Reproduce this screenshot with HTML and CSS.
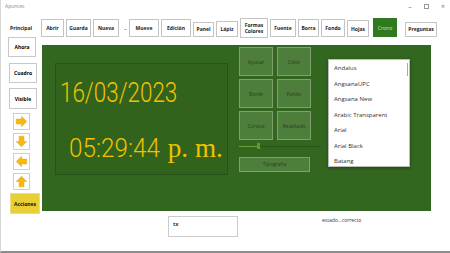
FILE: index.html
```html
<!DOCTYPE html>
<html lang="es">
<head>
    <meta charset="UTF-8">
    <meta name="viewport" content="width=device-width, initial-scale=1.0">
    <title>Apuntes</title>
    <link rel="stylesheet" href="styles.css">
</head>
<body>
    <div class="window">
        <header class="titlebar">
            <span class="title">Apuntes</span>
            <div class="controls">
                <span class="ctl">&#8211;</span>
                <span class="ctl max"></span>
                <span class="ctl">&#215;</span>
            </div>
        </header>

        <nav class="toolbar">
            <span class="label">Principal</span>
            <button class="tool abrir">Abrir</button>
            <button class="tool guarda">Guarda</button>
            <button class="tool nueva">Nueva</button>
            <span class="dash"></span>
            <button class="tool mueve">Mueve</button>
            <button class="tool edicion">Edición</button>
            <button class="tool panel-btn">Panel</button>
            <button class="tool lapiz">Lápiz</button>
            <button class="tool formas">Formas<br>Colores</button>
            <button class="tool fuente">Fuente</button>
            <button class="tool borra">Borra</button>
            <button class="tool fondo">Fondo</button>
            <button class="tool hojas">Hojas</button>
            <button class="tool crono">Crono</button>
            <button class="tool preguntas">Preguntas</button>
        </nav>

        <main class="workspace">
            <aside class="side">
                <button class="side-btn ahora">Ahora</button>
                <button class="side-btn cuadro">Cuadro</button>
                <button class="side-btn visible">Visible</button>
                <button class="arrow">
                    <svg viewBox="0 0 16 16" width="13" height="13"><polygon points="1.5,5 8,5 8,1.5 14.5,8 8,14.5 8,11 1.5,11"/></svg>
                </button>
                <button class="arrow">
                    <svg viewBox="0 0 16 16" width="13" height="13"><polygon points="5,1.5 11,1.5 11,8 14.5,8 8,14.5 1.5,8 5,8"/></svg>
                </button>
                <button class="arrow">
                    <svg viewBox="0 0 16 16" width="13" height="13"><polygon points="14.5,5 8,5 8,1.5 1.5,8 8,14.5 8,11 14.5,11"/></svg>
                </button>
                <button class="arrow">
                    <svg viewBox="0 0 16 16" width="13" height="13"><polygon points="5,14.5 11,14.5 11,8 14.5,8 8,1.5 1.5,8 5,8"/></svg>
                </button>
                <button class="acciones">Acciones</button>
            </aside>

            <section class="panel">
                <div class="clock">
                    <div class="date">16/03/2023</div>
                    <div class="time">05:29:44 <span class="ampm">p. m.</span></div>
                </div>

                <div class="format">
                    <div class="format-grid">
                        <button class="fmt">Ajustar</button>
                        <button class="fmt">Color</button>
                        <button class="fmt">Borde</button>
                        <button class="fmt">Fondo</button>
                        <button class="fmt">Cursiva</button>
                        <button class="fmt">Resaltado</button>
                    </div>
                    <div class="slider">
                        <span class="track-fill"></span>
                        <span class="thumb"></span>
                        <span class="track-rest"></span>
                    </div>
                    <button class="fmt tipografia">Tipografía</button>
                </div>

                <div class="fonts">
                    <ul>
                        <li>Andalus</li>
                        <li>AngsanaUPC</li>
                        <li>Angsana New</li>
                        <li>Arabic Transparent</li>
                        <li>Arial</li>
                        <li>Arial Black</li>
                        <li>Batang</li>
                    </ul>
                    <span class="scroll-thumb"></span>
                </div>
            </section>
        </main>

        <footer class="statusbar">
            <div class="textbox">tx</div>
            <span class="status">estado...correcto</span>
        </footer>
    </div>
</body>
</html>
```

FILE: styles.css
```css
/* Reset default margin and padding */
* {
    margin: 0;
    padding: 0;
    box-sizing: border-box;
}

body {
    font-family: "Open Sans", "Noto Sans", Arial, sans-serif;
    background-color: #fff;
    color: #222;
}

button {
    font-family: inherit;
    cursor: pointer;
}

.window {
    width: 450px;
    height: 253px;
    border-left: 1px solid #d8d8d8;
    border-bottom: 2px solid #8c8c8c;
    overflow: hidden;
}

/* Title bar */
.titlebar {
    height: 18px;
    display: flex;
    justify-content: space-between;
    align-items: flex-start;
    padding: 3px 0 0 4px;
}

.title {
    font-size: 5px;
    color: #8a8a8a;
}

.controls {
    display: flex;
    gap: 11px;
    padding-right: 4px;
    color: #777;
    font-size: 7px;
    line-height: 7px;
}

.ctl {
    width: 6px;
    text-align: center;
}

.ctl.max {
    width: 5px;
    height: 5px;
    margin-top: 1px;
    border: 1px solid #999;
}

/* Top toolbar */
.toolbar {
    height: 19px;
    display: flex;
    align-items: center;
    gap: 2px;
    padding-left: 9px;
}

.label {
    width: 23px;
    margin-right: 6px;
    font-size: 5px;
    font-weight: 700;
}

.tool {
    height: 18px;
    background-color: #fff;
    border: 1px solid #c4c4c4;
    font-size: 5px;
    font-weight: 700;
    line-height: 6px;
    color: #222;
}

.abrir { width: 23px; }
.guarda { width: 25px; }
.nueva { width: 26px; }
.mueve { width: 30px; }
.edicion { width: 30px; }
.panel-btn { width: 21px; height: 15px; margin-top: 3px; }
.lapiz { width: 22px; height: 16px; margin-top: 3px; }
.formas { width: 28px; height: 20px; }
.fuente { width: 26px; }
.borra { width: 21px; }
.fondo { width: 24px; }
.hojas { width: 22px; height: 17px; margin-top: 2px; }

.crono {
    width: 24px;
    height: 19px;
    margin-left: 2px;
    background-color: #2f7a1f;
    border-color: #2f7a1f;
    color: #cfe0c4;
    font-weight: 400;
}

.preguntas {
    width: 32px;
    height: 15px;
    margin-top: 3px;
    margin-left: 6px;
}

.dash {
    width: 3px;
    height: 1px;
    margin: 3px 0 0 3px;
    background-color: #bbb;
}

/* Main area */
.workspace {
    display: flex;
    align-items: flex-start;
}

.side {
    width: 40px;
    padding-left: 7px;
    display: flex;
    flex-direction: column;
    align-items: flex-start;
}

.side-btn {
    width: 28px;
    height: 20px;
    background-color: #fff;
    border: 1px solid #c8c8c8;
    font-size: 5px;
    font-weight: 700;
}

.cuadro { margin: 6px 0 0 1px; }
.visible { margin: 5px 0 0 1px; height: 21px; }

.arrow {
    width: 17px;
    height: 17px;
    margin: 3px 0 0 5px;
    background-color: #fff;
    border: 1px solid #cfcfcf;
    display: flex;
    justify-content: center;
    align-items: center;
}

.visible + .arrow { margin-top: 4px; }

.arrow svg polygon {
    fill: #f8b90c;
    stroke: #f0a000;
    stroke-width: 0.6;
}

.acciones {
    width: 30px;
    height: 21px;
    margin: 3px 0 0 2px;
    background-color: #e7cf34;
    border: 1px solid #eadc8a;
    font-size: 5px;
    font-weight: 700;
    color: #111;
}

/* Green panel */
.panel {
    width: 389px;
    height: 166px;
    margin: 8px 0 0 1px;
    background-color: #33661e;
    display: flex;
    align-items: flex-start;
    padding-left: 13px;
}

.clock {
    width: 173px;
    height: 112px;
    margin-top: 18px;
    background-color: #31631c;
    border: 1px solid #27521a;
    color: #f2c100;
    font-family: Roboto, "Liberation Sans", sans-serif;
    font-weight: 300;
    white-space: nowrap;
}

.date {
    font-size: 27px;
    line-height: 27px;
    margin: 16px 0 0 4px;
    transform: scaleX(0.83);
    transform-origin: left;
}

.time {
    font-size: 25px;
    line-height: 25px;
    margin: 28px 0 0 13px;
    transform: scaleX(0.97);
    transform-origin: left;
}

.ampm {
    font-family: "Liberation Serif", "DejaVu Serif", serif;
    font-weight: 400;
    font-size: 28px;
    margin-left: 2px;
}

.format {
    width: 82px;
    margin: 2px 0 0 11px;
}

.format-grid {
    display: grid;
    grid-template-columns: 34px 34px;
    grid-auto-rows: 29px;
    gap: 3px 4px;
}

.fmt {
    background-color: #4e7e3b;
    border: 1px solid #7fa06e;
    font-size: 5px;
    color: #2e3a28;
}

.slider {
    display: flex;
    align-items: center;
    height: 6px;
    margin-top: 3px;
}

.track-fill {
    width: 18px;
    height: 1px;
    background-color: #6aa23e;
}

.thumb {
    width: 3px;
    height: 6px;
    background-color: #5f9b34;
}

.track-rest {
    flex: 1;
    height: 1px;
    background-color: #2a5518;
}

.tipografia {
    width: 71px;
    height: 15px;
    margin-top: 7px;
}

.fonts {
    position: relative;
    width: 82px;
    height: 108px;
    margin: 14px 0 0 7px;
    background-color: #fff;
    border: 1px solid #bbb;
    box-shadow: 0 1px 3px rgba(0, 0, 0, 0.35);
}

.fonts ul {
    list-style: none;
    padding: 1px 0 0 5px;
}

.fonts li {
    font-size: 6px;
    line-height: 15.5px;
    color: #333;
}

.scroll-thumb {
    position: absolute;
    top: 3px;
    right: 1px;
    width: 1px;
    height: 13px;
    background-color: #a8a8a8;
}

/* Bottom bar */
.statusbar {
    display: flex;
    align-items: flex-start;
    padding-left: 167px;
    margin-top: 2px;
}

.textbox {
    width: 70px;
    height: 21px;
    border: 1px solid #ccc;
    font-size: 6px;
    font-weight: 600;
    padding: 3px 0 0 4px;
}

.status {
    margin: 1px 0 0 84px;
    font-size: 5px;
    color: #333;
}
```
